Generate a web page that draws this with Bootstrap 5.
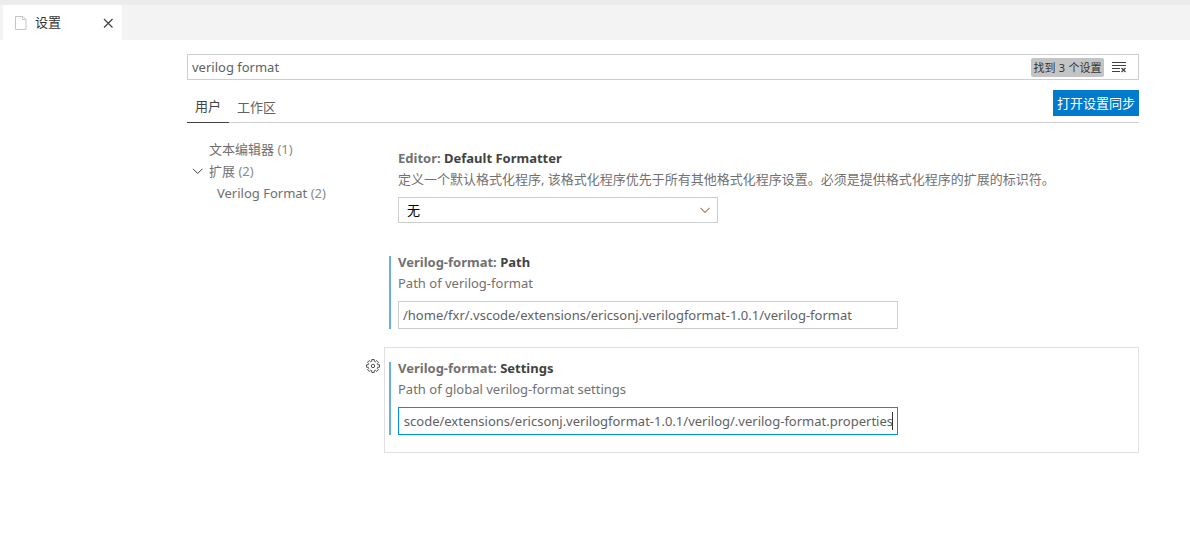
<!DOCTYPE html>
<html lang="zh-CN">
<head>
<meta charset="utf-8">
<title>设置</title>
<link href="https://cdn.jsdelivr.net/npm/bootstrap@5.3.0/dist/css/bootstrap.min.css" rel="stylesheet">
<style>
body{font-family:"Noto Sans","Noto Sans CJK SC",sans-serif;font-size:13px;line-height:20px;color:#616161;background:#fff;height:542px;overflow:hidden}
svg{display:block;flex:none}
.tabstrip{height:40px;padding:0 0 0 3px;background:#f3f3f3;border-top:5px solid #ececec}
.editor-tab{width:119px;height:35px;padding:0 8px 0 11px;background:#fff;color:#333}
.editor-tab .title{padding:0 0 2px 7px}
.settings{width:952px;margin:14px 0 0 187px}
.search{height:26px;border:1px solid #cecece;padding:0 11px 0 4px}
.found{background:#c4c4c4;color:#333;font-size:11px;line-height:19px;height:19px;width:73px;text-align:center;white-space:nowrap;word-spacing:.4px;border-radius:2px;margin-right:7px}
.scopes{height:43px;border-bottom:1px solid #cecece}
.scope{height:33px;padding:7px 8px 0;line-height:20px;margin-bottom:-1px}
.scope.active{border-bottom:1px solid #424242;color:#424242;width:42px;padding-top:6px}
.sync{height:26px;line-height:26px;background:#007acc;color:#fff;border:0;border-radius:0;font-size:13px;padding:0;width:86px;margin-top:10px}
.toc{width:197px;padding-top:15px;line-height:22px;color:#6f6f6f}
.toc .count{color:#8a8a8a}
.toc .group{padding-left:22px}
.toc .deep{padding-left:30px}
.list{padding-top:14px}
.setting{border:1px solid transparent;height:106px;padding:10px 0 0 13px;position:relative}
.setting.first{height:104px}
.setting.focused{border-color:#e0e0e0}
.setting.modified::before{content:"";position:absolute;left:4px;top:14px;width:2px;height:73px;background:#66afe0}
.setting.modified:not(.focused)::before{top:14px}
.gear{position:absolute;left:-20px;top:10px}
.name{font-weight:700;color:#424242;line-height:20px}
.name span{color:#717171}
.desc{color:#717171;line-height:20px;margin-top:1px}
.field{width:500px;height:28px;border:1px solid #cecece;margin-top:8px;padding:0 4px;white-space:nowrap}
.field.editing{border-color:#0090f1}
.field .clip{overflow:hidden;width:490px;margin-left:1px}
.caret{width:1px;height:18px;background:#333;margin-left:-1px}
.choice{width:320px;height:26px;border:1px solid #cecece;margin-top:8px;padding:0 6px 0 8px;color:#000}
</style>
</head>
<body>
<div class="tabstrip d-flex">
  <div class="editor-tab d-flex align-items-center">
    <svg width="14" height="16" viewBox="0 0 14 16" fill="none" stroke="#c5c5c5"><path d="M1.5 1.500h7.500l3 3v10H1.500zM8.500 1.500v3h3"/></svg>
    <span class="title flex-grow-1">设置</span>
    <svg width="12" height="12" viewBox="0 0 12 12" stroke="#424242" stroke-width="1.2"><path d="M2 2l8.500 8.500M10.500 2L2 10.500"/></svg>
  </div>
</div>
<main class="settings">
  <div class="search d-flex align-items-center">
    <span class="flex-grow-1">verilog format</span>
    <span class="found">找到 3 个设置</span>
    <svg width="16" height="16" viewBox="0 0 16 16" fill="none" stroke="#424242"><path d="M1 3.500h14M1 6.500h14M1 9.500h8M1 12.500h8"/><path stroke-width="1.300" d="M10.500 9l4 4M14.500 9l-4 4"/></svg>
  </div>
  <div class="scopes d-flex align-items-end">
    <div class="scope active">用户</div>
    <div class="scope flex-grow-1">工作区</div>
    <button class="sync align-self-start">打开设置同步</button>
  </div>
  <div class="d-flex">
    <nav class="toc">
      <div class="group">文本编辑器 <span class="count">(1)</span></div>
      <div class="d-flex align-items-center"><svg width="22" height="16" viewBox="0 0 22 16" fill="none" stroke="#424242"><path d="M6 5.800l4.700 4.700 4.700-4.700"/></svg><div>扩展 <span class="count">(2)</span></div></div>
      <div class="deep">Verilog Format <span class="count">(2)</span></div>
    </nav>
    <section class="flex-grow-1 list">
      <div class="setting first">
        <div class="name"><span>Editor:</span> Default Formatter</div>
        <div class="desc">定义一个默认格式化程序, 该格式化程序优先于所有其他格式化程序设置。必须是提供格式化程序的扩展的标识符。</div>
        <div class="choice d-flex align-items-center justify-content-between"><span>无</span><svg width="12" height="12" viewBox="0 0 12 12" fill="none" stroke="#a8835c" stroke-width="1.200"><path d="M1.500 3.800L6 8.300l4.500-4.500"/></svg></div>
      </div>
      <div class="setting modified">
        <div class="name"><span>Verilog-format:</span> Path</div>
        <div class="desc">Path of verilog-format</div>
        <div class="field d-flex align-items-center">/home/fxr/.vscode/extensions/ericsonj.verilogformat-1.0.1/verilog-format</div>
      </div>
      <div class="setting modified focused">
        <svg class="gear" width="16" height="16" viewBox="-8 -8 16 16" fill="none" stroke="#505050" stroke-linejoin="round"><circle r="1.700"/><path d="M-1.300-4.700L-1.200-6.500H1.200L1.300-4.700L2.400-4.240L3.750-5.440L5.440-3.750L4.240-2.400L4.700-1.300L6.500-1.200V1.200L4.700 1.300L4.240 2.400L5.440 3.750L3.750 5.440L2.400 4.240L1.300 4.700L1.200 6.500H-1.200L-1.300 4.700L-2.400 4.240L-3.750 5.440L-5.440 3.750L-4.240 2.400L-4.700 1.300L-6.500 1.200V-1.200L-4.700-1.300L-4.240-2.400L-5.440-3.750L-3.750-5.440L-2.400-4.240Z"/></svg>
        <div class="name"><span>Verilog-format:</span> Settings</div>
        <div class="desc">Path of global verilog-format settings</div>
        <div class="field editing d-flex align-items-center"><div class="clip d-flex justify-content-end"><span>vscode/extensions/ericsonj.verilogformat-1.0.1/verilog/.verilog-format.properties</span></div><span class="caret"></span></div>
      </div>
    </section>
  </div>
</main>
<script src="https://cdn.jsdelivr.net/npm/bootstrap@5.3.0/dist/js/bootstrap.bundle.min.js"></script>
</body>
</html>
